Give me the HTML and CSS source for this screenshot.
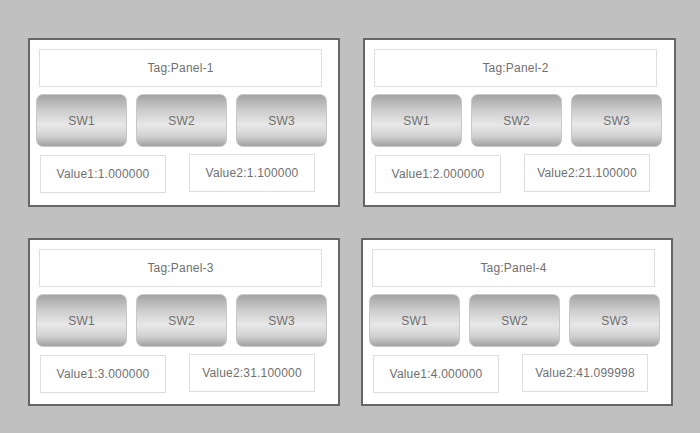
FILE: index.html
```html
<!DOCTYPE html>
<html lang="en">
    <head>
        <meta charset="UTF-8" />
        <meta name="viewport" content="width=device-width, initial-scale=1.0" />
        <title>Panels</title>
        <link rel="stylesheet" href="styles.css">
    </head>
    <body>
        <div class="board">
            <div class="panel">
                <div class="tag">Tag:Panel-1</div>
                <div class="switches">
                    <button class="sw">SW1</button>
                    <button class="sw">SW2</button>
                    <button class="sw">SW3</button>
                </div>
                <div class="values">
                    <div class="value">Value1:1.000000</div>
                    <div class="value value2">Value2:1.100000</div>
                </div>
            </div>

            <div class="panel">
                <div class="tag">Tag:Panel-2</div>
                <div class="switches">
                    <button class="sw">SW1</button>
                    <button class="sw">SW2</button>
                    <button class="sw">SW3</button>
                </div>
                <div class="values">
                    <div class="value">Value1:2.000000</div>
                    <div class="value value2">Value2:21.100000</div>
                </div>
            </div>

            <div class="panel">
                <div class="tag">Tag:Panel-3</div>
                <div class="switches">
                    <button class="sw">SW1</button>
                    <button class="sw">SW2</button>
                    <button class="sw">SW3</button>
                </div>
                <div class="values">
                    <div class="value">Value1:3.000000</div>
                    <div class="value value2">Value2:31.100000</div>
                </div>
            </div>

            <div class="panel panel-shift">
                <div class="tag">Tag:Panel-4</div>
                <div class="switches">
                    <button class="sw">SW1</button>
                    <button class="sw">SW2</button>
                    <button class="sw">SW3</button>
                </div>
                <div class="values">
                    <div class="value">Value1:4.000000</div>
                    <div class="value value2">Value2:41.099998</div>
                </div>
            </div>
        </div>
    </body>
</html>
```

FILE: styles.css
```css
html,
body {
    margin: 0;
    height: 100%;
}

body {
    background: #c0c0c0;
    font-family: "Liberation Sans", Arial, sans-serif;
    font-size: 12px;
    letter-spacing: 0.2px;
    color: #707070;
}

.board {
    display: grid;
    grid-template-columns: 312px 313px;
    grid-template-rows: 169px 168px;
    column-gap: 23px;
    row-gap: 31px;
    padding: 38px 0 0 28px;
}

.panel {
    box-sizing: border-box;
    background: #fff;
    border: 2px solid #666;
    padding: 9px 0 0 6px;
    display: flex;
    flex-direction: column;
}

.panel-shift {
    margin-left: -2px;
    width: 312px;
}

.tag {
    box-sizing: border-box;
    width: 283px;
    height: 38px;
    margin-left: 3px;
    border: 1px solid #dedede;
    display: flex;
    align-items: center;
    justify-content: center;
}

.switches {
    display: flex;
    gap: 9px;
    margin-top: 7px;
}

.sw {
    box-sizing: border-box;
    width: 91px;
    height: 53px;
    border: 1px solid #c8c8c8;
    border-radius: 7px;
    background: linear-gradient(to bottom, #a4a4a4 0%, #cccccc 30%, #e8e8e8 58%, #d2d2d2 80%, #a2a2a2 100%);
    font-family: inherit;
    font-size: 12px;
    letter-spacing: 0.2px;
    color: #707070;
    padding: 0;
}

.values {
    display: flex;
    gap: 23px;
    margin-top: 8px;
    padding-left: 4px;
}

.value {
    box-sizing: border-box;
    width: 126px;
    height: 38px;
    border: 1px solid #dedede;
    display: flex;
    align-items: center;
    justify-content: center;
}

.value2 {
    margin-top: -1px;
}
```
